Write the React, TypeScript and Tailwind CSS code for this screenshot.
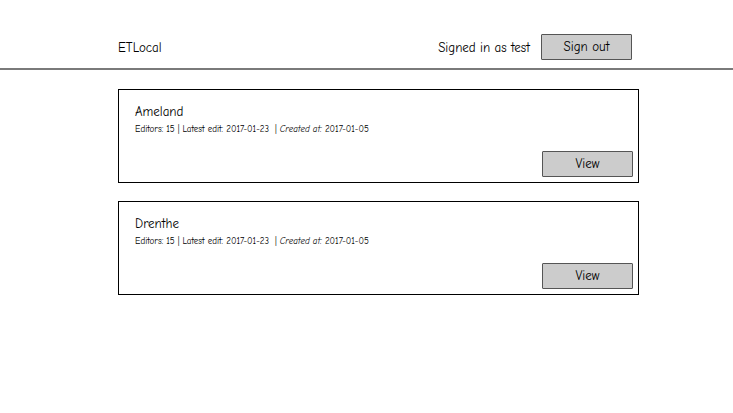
import React from 'react';

const font = { fontFamily: '"Comic Sans MS", "Comic Neue", "DejaVu Sans", sans-serif' };

const regions = [
  { name: 'Ameland', editors: 15, latest: '2017-01-23', created: '2017-01-05' },
  { name: 'Drenthe', editors: 15, latest: '2017-01-23', created: '2017-01-05' },
];

export default function App() {
  return (
    <div className="w-[733px] h-[413px] bg-white text-black" style={font}>
      {/* Header */}
      <div className="h-[70px] border-b-2 border-[#7a7a7a] flex items-end pb-[8px]">
        <div className="ml-[118px] w-[514px] flex items-center justify-between">
          <span className="text-[13px] pt-[2px]">ETLocal</span>
          <div className="flex items-center">
            <span className="text-[13px] mr-[11px] pt-[2px]">Signed in as test</span>
            <button className="w-[91px] h-[26px] bg-[#cccccc] border border-[#555] text-[13px] rounded-[1px]">
              Sign out
            </button>
          </div>
        </div>
      </div>

      {/* Region cards */}
      <div className="ml-[118px] w-[521px] mt-[19px] flex flex-col gap-[18px]">
        {regions.map((r) => (
          <div key={r.name} className="border border-black pt-[12px] pl-[16px] pr-[5px] pb-[5px]">
            <div className="text-[13px] leading-[20px]">{r.name}</div>
            <div className="text-[9px] leading-[13px] text-black mt-[1px]">
              Editors: {r.editors} | Latest edit: {r.latest} &nbsp;| <span className="italic">Created at:</span> {r.created}
            </div>
            <div className="flex justify-end mt-[15px]">
              <button className="w-[91px] h-[26px] bg-[#cccccc] border border-[#555] text-[13px] rounded-[1px]">
                View
              </button>
            </div>
          </div>
        ))}
      </div>
    </div>
  );
}
